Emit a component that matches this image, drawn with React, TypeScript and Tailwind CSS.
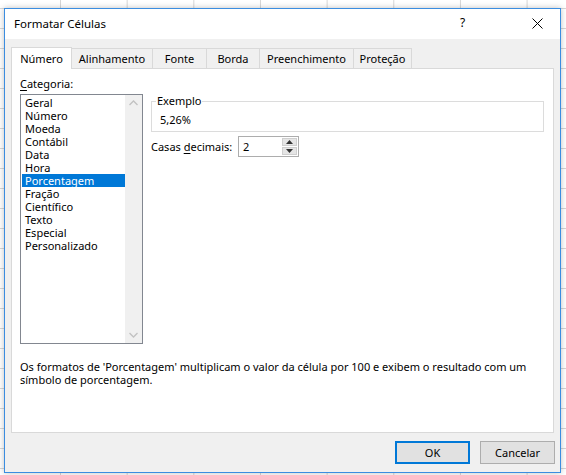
import React from "react";

const items = [
  "Geral",
  "Número",
  "Moeda",
  "Contábil",
  "Data",
  "Hora",
  "Porcentagem",
  "Fração",
  "Científico",
  "Texto",
  "Especial",
  "Personalizado",
];

const tabs = [
  { label: "Número", w: "w-[61px]", active: true },
  { label: "Alinhamento", w: "w-[82px]" },
  { label: "Fonte", w: "w-[55px]" },
  { label: "Borda", w: "w-[54px]" },
  { label: "Preenchimento", w: "w-[95px]" },
  { label: "Proteção", w: "w-[59px]" },
];

export default function App() {
  return (
    <div className="relative w-[566px] h-[475px] overflow-hidden bg-white [background-image:linear-gradient(to_right,#d6d6d6_1px,transparent_1px),linear-gradient(to_bottom,#d6d6d6_1px,transparent_1px)] [background-size:66.67px_20px] [background-position:60px_8px] [font-family:'Noto_Sans',sans-serif] text-[11px] text-black">
      <div className="absolute left-[4px] top-[8px] w-[557px] h-[465px] border border-[#3b8de0] flex flex-col shadow-[0_0_6px_rgba(0,0,0,0.25)]">
        {/* title bar */}
        <div className="h-[30px] bg-white flex items-center pl-[9px] pb-[1px] relative shrink-0">
          <span className="leading-[13px] text-[11.5px]">Formatar Células</span>
          <span className="absolute left-[455px] top-[6px] text-[12px] leading-[15px]">?</span>
          <svg className="absolute left-[527px] top-[9px]" width="11" height="11" viewBox="0 0 11 11">
            <path d="M0.5 0.5 L10.5 10.5 M10.5 0.5 L0.5 10.5" stroke="#000" strokeWidth="1" />
          </svg>
        </div>
        {/* body */}
        <div className="flex-1 bg-[#f0f0f0] px-[6px] pt-[7px] flex flex-col">
          {/* tabs */}
          <div className="flex items-end h-[22px] relative z-10">
            {tabs.map((t, i) =>
              t.active ? (
                <div
                  key={i}
                  className={`${t.w} h-[22px] -mb-px bg-white border border-b-0 border-[#d9d9d9] flex items-center justify-center leading-[13px] pb-[1px]`}
                >
                  {t.label}
                </div>
              ) : (
                <div
                  key={i}
                  className={`${t.w} h-[20px] -ml-px border border-b-0 border-[#d9d9d9] bg-[#f0f0f0] flex items-center justify-center leading-[13px]`}
                >
                  {t.label}
                </div>
              )
            )}
          </div>
          {/* panel */}
          <div className="h-[365px] bg-white border border-[#d9d9d9] flex flex-col pl-[8px] pt-[8px]">
            <div className="flex gap-[8px]">
              {/* left column */}
              <div className="flex flex-col w-[123px]">
                <div className="leading-[13px] h-[13px]">
                  <span className="underline underline-offset-2">C</span>ategoria:
                </div>
                <div className="mt-[4px] h-[250px] border border-[#828790] bg-white flex">
                  <div className="flex-1 pt-[1px] pl-[1px]">
                    {items.map((it) => (
                      <div
                        key={it}
                        className={`h-[13px] leading-[13px] pl-[3px] ${
                          it === "Porcentagem" ? "bg-[#0078d7] text-white" : ""
                        }`}
                      >
                        {it}
                      </div>
                    ))}
                  </div>
                  <div className="w-[17px] bg-[#f0f0f0] flex flex-col justify-between items-center py-[5px]">
                    <svg width="9" height="6" viewBox="0 0 9 6">
                      <path d="M0.5 5 L4.5 1 L8.5 5" stroke="#c2c2c2" strokeWidth="1.3" fill="none" />
                    </svg>
                    <svg width="9" height="6" viewBox="0 0 9 6">
                      <path d="M0.5 1 L4.5 5 L8.5 1" stroke="#c2c2c2" strokeWidth="1.3" fill="none" />
                    </svg>
                  </div>
                </div>
              </div>
              {/* right column */}
              <div className="flex flex-col w-[393px]">
                <div className="mt-[24px] h-[31px] border border-[#dcdcdc] relative pl-[8px] pt-[11px]">
                  <span className="absolute left-[4px] -top-[8px] bg-white px-[1px] leading-[13px]">Exemplo</span>
                  <div className="leading-[13px]">5,26%</div>
                </div>
                <div className="mt-[4px] flex items-center">
                  <span className="w-[87px] leading-[13px] whitespace-nowrap">
                    Casas <span className="underline underline-offset-2">d</span>ecimais:
                  </span>
                  <div className="w-[61px] h-[21px] border border-[#adadad] bg-white flex">
                    <div className="flex-1 pl-[4px] flex items-center leading-[13px]">2</div>
                    <div className="w-[17px] flex flex-col p-[1px] gap-px">
                      <div className="flex-1 bg-[#e5e5e5] border border-[#cfcfcf] flex items-center justify-center">
                        <svg width="7" height="4" viewBox="0 0 7 4">
                          <path d="M0 4 L3.5 0 L7 4 Z" fill="#333" />
                        </svg>
                      </div>
                      <div className="flex-1 bg-[#e5e5e5] border border-[#cfcfcf] flex items-center justify-center">
                        <svg width="7" height="4" viewBox="0 0 7 4">
                          <path d="M0 0 L3.5 4 L7 0 Z" fill="#333" />
                        </svg>
                      </div>
                    </div>
                  </div>
                </div>
              </div>
            </div>
            <div className="mt-[16px] leading-[13px]">
              <div className="whitespace-nowrap">Os formatos de 'Porcentagem' multiplicam o valor da célula por 100 e exibem o resultado com um</div>
              <div>símbolo de porcentagem.</div>
            </div>
          </div>
          {/* buttons */}
          <div className="flex justify-end gap-[10px] mt-[8px] -mr-px">
            <button className="w-[75px] h-[23px] bg-[#e1e1e1] border-2 border-[#0078d7] leading-[13px]">OK</button>
            <button className="w-[75px] h-[23px] bg-[#e1e1e1] border border-[#adadad] leading-[13px]">Cancelar</button>
          </div>
        </div>
      </div>
    </div>
  );
}
